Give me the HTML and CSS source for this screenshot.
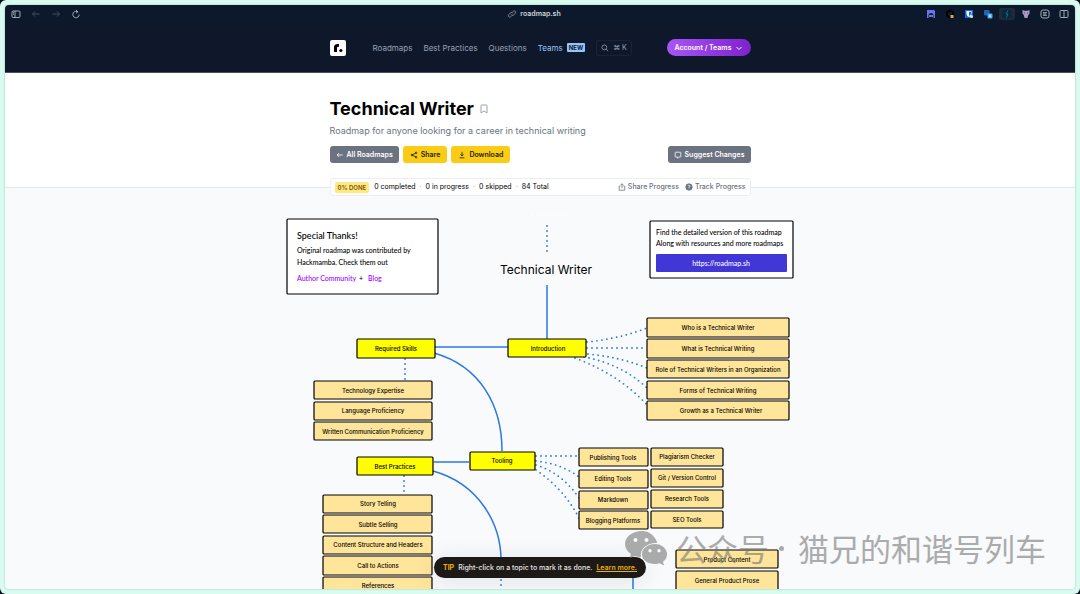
FILE: index.html
```html
<!DOCTYPE html>
<html lang="en">
<head>
<meta charset="utf-8">
<title>Technical Writer - roadmap.sh</title>
<link rel="stylesheet" href="styles.css">
</head>
<body>
<div class="frame">
<div class="window">
  <div class="toolbar">
    <div class="tools">
      <button class="tool" aria-label="Sidebar"><svg viewBox="0 0 10 10"><rect x="1" y="2" width="8" height="6.5" rx="1"/><path d="M4 2v6.5M2 3.7h1M2 5.2h1"/></svg></button>
      <button class="tool dim" aria-label="Back"><svg viewBox="0 0 10 10"><path d="M8.5 5h-7M4 2.5 1.5 5 4 7.5"/></svg></button>
      <button class="tool dim" aria-label="Forward"><svg viewBox="0 0 10 10"><path d="M1.5 5h7M6 2.500 8.500 5 6 7.500"/></svg></button>
      <button class="tool" aria-label="Reload"><svg viewBox="0 0 10 10"><path d="M7.300 3.300A3.200 3.200 0 1 0 8.200 5.500M5 1l1.800 1.700L5 4.300"/></svg></button>
    </div>
    <div class="address"><svg viewBox="0 0 10 10"><path d="M4.200 7.300 3.400 8.100A1.600 1.600 0 0 1 1.500 5.900L3.500 4A1.600 1.600 0 0 1 5.900 4.200M5.800 2.700 6.600 1.900A1.600 1.600 0 0 1 8.500 4.100L6.500 6A1.600 1.600 0 0 1 4.100 5.800"/></svg><span>roadmap.sh</span></div>
    <div class="tools extensions">
      <svg viewBox="0 0 10 10"><path fill="#6675f2" d="M1 1h7l1 1v7H7.500A2.500 2.500 0 0 0 2.500 9H1z"/><path d="M2.500 8V6.500a2.500 2.500 0 0 1 5 0V8z" fill="#101a4a"/><path d="M3 7h4" stroke="#cfd6ff"/></svg>
      <svg viewBox="0 0 10 10"><circle cx="5" cy="5" r="3.200" fill="none" stroke="#000" stroke-width="2"/><rect x="5.500" y="6" width="3" height="3" fill="#e8a04a"/></svg>
      <svg viewBox="0 0 10 10"><rect x="1" y="1" width="8" height="8" fill="#1769e0"/><path fill="#fff" d="M2.500 2h5v2.500q0 2.500-2.500 3.500Q2.500 7 2.500 4.500z"/><path fill="#1769e0" d="M5 2.700h2v2Q7 6 5 7z"/><circle cx="7.500" cy="7.500" r="1.500" fill="#ddd"/></svg>
      <svg viewBox="0 0 10 10"><rect x="1" y="1" width="5.500" height="5.500" rx="1" fill="#2262b8"/><rect x="4.500" y="4.500" width="5" height="5" rx="1" fill="#3da9f5"/><path d="M6 8.500 7 5.500l1 3M6.500 7.500h1" fill="none" stroke="#fff" stroke-width=".6"/></svg>
      <span class="active"><svg viewBox="0 0 10 10"><rect x=".5" y="1" width="9" height="8" fill="#06283a"/><path d="M6 1.500 4 5h2L4.500 8.500" fill="none" stroke="#17708a"/></svg></span>
      <svg viewBox="0 0 10 10"><path fill="#a99abf" d="M1.500 1 3.500 1.700h3L8.500 1v3.500L7 6.500 6.500 9h-3L3 6.500 1.500 4.500z"/><path d="M3.500 3.500v1M6.500 3.500v1" stroke="#5b4b75"/></svg>
      <svg class="line" viewBox="0 0 10 10"><rect x="1" y="1" width="8" height="8" rx="2"/><path d="M3 3.700h4M3 6.300h4M3 5h3"/></svg>
      <svg class="line" viewBox="0 0 10 10"><rect x="1" y="1.500" width="8" height="7" rx="1"/><path d="M5 1.500v7"/></svg>
    </div>
  </div>

  <header class="header">
    <div class="container bar">
      <a class="logo" href="#" aria-label="Home"><svg viewBox="0 0 16 16"><rect width="16" height="16" rx="2" fill="#fff"/><path d="M4 12V7.500Q4 4 7.500 4H9v2.700H8Q7 6.700 7 8v4z"/><circle cx="10.900" cy="10.500" r="1.600"/></svg></a>
      <nav class="nav">
        <a href="#">Roadmaps</a><a href="#">Best Practices</a><a href="#">Questions</a><a class="teams" href="#">Teams <span class="new">NEW</span></a>
        <button class="search"><svg viewBox="0 0 10 10"><circle cx="4.200" cy="4.200" r="3"/><path d="m6.500 6.500 2.500 2.500"/></svg><span>⌘ K</span></button>
      </nav>
      <button class="account"><span>Account / Teams</span><svg viewBox="0 0 10 10"><path d="m2.500 4 2.500 2.500L7.500 4"/></svg></button>
    </div>
  </header>

  <section class="hero">
    <div class="container">
      <div class="title"><h1>Technical Writer</h1><button class="bookmark" aria-label="Bookmark"><svg viewBox="0 0 10 10"><path d="M2 1.500q0-.5.500-.5h5q.5 0 .5.500V9L5 7 2 9z"/></svg></button></div>
      <p class="subtitle">Roadmap for anyone looking for a career in technical writing</p>
      <div class="actions">
        <a class="btn gray" href="#"><svg viewBox="0 0 10 10"><path d="M8.500 5h-7M4 2.500 1.500 5 4 7.500"/></svg>All Roadmaps</a>
        <button class="btn yellow"><svg viewBox="0 0 10 10"><path d="M2.500 5 7.500 2.500M2.500 5l5 2.500"/><circle cx="2.300" cy="5" r="1"/><circle cx="7.700" cy="2.300" r="1"/><circle cx="7.700" cy="7.700" r="1"/></svg>Share</button>
        <button class="btn yellow"><svg viewBox="0 0 10 10"><path d="M5 1v5M3 4.300l2 2 2-2M2 8.500h6"/></svg>Download</button>
        <a class="btn gray suggest" href="#"><svg viewBox="0 0 10 10"><path d="M2 1.500h6q.500 0 .500.500v5q0 .500-.500.500H6L4.500 9V7.500H2q-.500 0-.500-.500V2q0-.500.500-.500z"/></svg>Suggest Changes</a>
      </div>
      <div class="progress">
        <span class="done">0% DONE</span>
        <span>0 completed</span><i>·</i><span>0 in progress</span><i>·</i><span>0 skipped</span><i>·</i><span>84 Total</span>
        <button class="plain share"><svg viewBox="0 0 10 10"><path d="M5 6.500V1M3 2.800 5 1l2 1.800M3 4H1.500v5h7V4H7"/></svg>Share Progress</button>
        <button class="plain"><svg viewBox="0 0 10 10"><circle class="solid" cx="5" cy="5" r="4"/><path class="mark" d="M3.800 4A1.200 1.200 0 1 1 5 5.200v.7M5 6.800v.8"/></svg>Track Progress</button>
      </div>
    </div>
  </section>

  <main class="roadmap">
    <svg class="map" viewBox="270 188 540 401" role="group" aria-label="Technical Writer roadmap">
      <path class="ghost" d="M531 215h36"/>
      <g class="solid-line">
        <path d="M547 285v54M435 347h73M434 353C480 366 502 405 502 451M434 462h35M433 471C480 484 501 525 501 560M633 575v20"/>
      </g>
      <g class="dots">
        <path d="M547 226v28M405 359v22M404 476v19M587 342Q618 339 647 328M587 348h60M588 354Q620 357 647 368M584 357Q622 364 647 388M575 358Q620 375 647 405M501 580v9"/>
        <path d="M536 456h43M536 461Q562 464 579 477M536 465Q562 473 579 498M536 470Q564 489 579 518"/>
      </g>

      <g class="card">
        <rect x="287" y="219" width="151" height="75" rx="1"/>
        <text class="h" x="297" y="239">Special Thanks!</text>
        <text x="297" y="253">Original roadmap was contributed by</text>
        <text x="297" y="265">Hackmamba. Check them out</text>
        <a href="#"><text class="link" x="297" y="281">Author Community</text></a>
        <text x="359" y="281">+</text>
        <a href="#"><text class="link" x="368" y="281">Blog</text></a>
      </g>
      <g class="card">
        <rect x="650" y="221" width="143" height="57" rx="1"/>
        <text x="656" y="235">Find the detailed version of this roadmap</text>
        <text x="656" y="246">Along with resources and more roadmaps</text>
        <a href="#"><rect class="cta" x="656" y="254" width="131" height="18" rx="1"/><text class="cta-text" x="721" y="266">https://roadmap.sh</text></a>
      </g>
      <text class="root" x="546" y="274">Technical Writer</text>

      <g class="topic">
        <rect x="357" y="339" width="78" height="19" rx="1"/><text x="396" y="351">Required Skills</text>
        <rect x="508" y="339" width="78" height="18" rx="1"/><text x="548" y="351">Introduction</text>
        <rect x="470" y="452" width="65" height="18" rx="1"/><text x="502" y="463">Tooling</text>
        <rect x="357" y="457" width="76" height="18" rx="1"/><text x="395" y="469">Best Practices</text>
      </g>
      <g class="subtopic">
        <rect x="647" y="318" width="142" height="19" rx="1"/><text x="718" y="330">Who is a Technical Writer</text>
        <rect x="647" y="339" width="142" height="19" rx="1"/><text x="718" y="351">What is Technical Writing</text>
        <rect x="647" y="360" width="142" height="18" rx="1"/><text x="718" y="372">Role of Technical Writers in an Organization</text>
        <rect x="647" y="381" width="142" height="18" rx="1"/><text x="718" y="393">Forms of Technical Writing</text>
        <rect x="647" y="401" width="142" height="19" rx="1"/><text x="721" y="413">Growth as a Technical Writer</text>

        <rect x="314" y="381" width="118" height="18" rx="1"/><text x="373" y="393">Technology Expertise</text>
        <rect x="314" y="402" width="118" height="18" rx="1"/><text x="373" y="413">Language Proficiency</text>
        <rect x="314" y="422" width="118" height="18" rx="1"/><text x="373" y="434">Written Communication Proficiency</text>

        <rect x="323" y="495" width="109" height="18" rx="1"/><text x="378" y="506">Story Telling</text>
        <rect x="323" y="515" width="109" height="18" rx="1"/><text x="378" y="527">Subtle Selling</text>
        <rect x="323" y="536" width="109" height="18" rx="1"/><text x="378" y="547">Content Structure and Headers</text>
        <rect x="323" y="556" width="109" height="19" rx="1"/><text x="378" y="568">Call to Actions</text>
        <rect x="323" y="577" width="109" height="18" rx="1"/><text x="378" y="588">References</text>

        <rect x="579" y="448" width="69" height="18" rx="1"/><text x="613" y="460">Publishing Tools</text>
        <rect x="579" y="470" width="69" height="18" rx="1"/><text x="613" y="481">Editing Tools</text>
        <rect x="579" y="491" width="69" height="18" rx="1"/><text x="613" y="502">Markdown</text>
        <rect x="579" y="511" width="69" height="18" rx="1"/><text x="613" y="523">Blogging Platforms</text>
        <rect x="651" y="448" width="72" height="18" rx="1"/><text x="687" y="459">Plagiarism Checker</text>
        <rect x="651" y="469" width="72" height="18" rx="1"/><text x="687" y="480">Git / Version Control</text>
        <rect x="651" y="490" width="72" height="18" rx="1"/><text x="687" y="501">Research Tools</text>
        <rect x="651" y="511" width="72" height="17" rx="1"/><text x="687" y="522">SEO Tools</text>

        <rect x="676" y="550" width="102" height="18" rx="1"/><text x="727" y="562">Product Content</text>
        <rect x="676" y="571" width="102" height="19" rx="1"/><text x="727" y="583">General Product Prose</text>
      </g>
    </svg>
    <div class="tip"><b>TIP</b><span>Right-click on a topic to mark it as done.</span><a href="#">Learn more.</a></div>
    <div class="watermark" lang="zh">
      <svg viewBox="0 0 42 35"><path fill-rule="evenodd" d="M17 0C7.500 0 0 5.800 0 13c0 4 2.300 7.500 6 10l-1.300 4.500 5-2.500q3 1 6.300 1C14.500 18 22 11.500 32.300 12 30 4.500 24 0 17 0zM10.500 7a2 2 0 1 1 0 4 2 2 0 0 1 0-4zm11 0a2 2 0 1 1 0 4 2 2 0 0 1 0-4z"/><path fill-rule="evenodd" d="M30 13c-7.500 0-13 4.500-13 10.200S22.500 33 30 33q2.500 0 4.700-.7L39 34.500l-1-3.700c2.600-2 4-4.600 4-7.600C42 17.500 36.500 13 30 13zm-5 5a1.700 1.700 0 1 1 0 3.400 1.700 1.700 0 0 1 0-3.400zm9 0a1.700 1.700 0 1 1 0 3.400 1.700 1.700 0 0 1 0-3.400z"/></svg>
      <span>公众号</span><span class="dot"></span><span>猫兄的和谐号列车</span>
    </div>
  </main>
</div>
</div>
</body>
</html>
```

FILE: styles.css
```css
* { box-sizing: border-box; }

body {
  margin: 0;
  background: #0b1020;
  font-family: Inter, "Noto Sans CJK SC", sans-serif;
  font-size: 8px;
  line-height: 12px;
}

a { color: inherit; text-decoration: none; }

button {
  padding: 0;
  border: 0;
  background: none;
  color: inherit;
  font: inherit;
  cursor: pointer;
}

svg { fill: none; stroke: currentColor; flex: none; }

.frame {
  display: flex;
  height: 100vh;
  padding: 5px;
  border-radius: 6px;
  background: #d8fcf0;
}

.window {
  display: flex;
  flex: 1;
  flex-direction: column;
  overflow: hidden;
  border-radius: 4px;
  background: #fff;
  box-shadow: 0 0 2px #8fb8ae;
}

.toolbar {
  display: grid;
  grid-template-columns: 1fr auto 1fr;
  align-items: center;
  height: 18px;
  padding: 0 6px;
  background: #0c182b;
  color: #a3a9b3;
}

.tools { display: flex; align-items: center; gap: 10px; }
.tools svg, .address svg { display: block; width: 10px; height: 10px; }
.tool.dim { color: #434c5c; }
.extensions { justify-content: flex-end; gap: 9px; }
.extensions svg { stroke: none; }
.extensions .line { stroke: currentColor; }
.active { margin: 0 -3px; padding: 1px 3px; border-radius: 2px; background: #1f2a3b; }
.address { display: flex; align-items: center; gap: 3px; margin-right: 12px; color: #d2d5da; font-size: 7px; font-weight: 600; }
.address svg { color: #8c939f; }

.container { width: 100%; max-width: 421px; margin: 0 auto; }

.header {
  display: flex;
  align-items: center;
  height: 50px;
  border-bottom: 1px solid #475060;
  background: #0f172a;
}

.bar { display: flex; align-items: center; }
.logo svg { display: block; width: 16px; height: 16px; fill: #000; stroke: none; }
.nav { display: flex; align-items: center; gap: 11px; margin-left: 27px; color: #94a3b8; white-space: nowrap; }
.teams { display: flex; align-items: center; gap: 4px; color: #93c5fd; }
.new { padding: 0 2px; border-radius: 1px; background: #93c5fd; color: #0f172a; font-size: 6px; font-weight: 700; line-height: 9px; }
.search { display: flex; align-items: center; gap: 4px; height: 16px; padding: 0 4px; border: 1px solid #1a2334; border-radius: 3px; font-size: 7px; }
.search svg { width: 8px; height: 8px; }
.account {
  display: flex;
  align-items: center;
  gap: 2px;
  height: 17px;
  margin-left: auto;
  padding: 0 7px;
  border-radius: 9px;
  background: linear-gradient(90deg, #a855f7, #7e22ce);
  color: #fff;
  font-size: 7px;
  font-weight: 600;
}
.account svg { width: 10px; height: 10px; }

.hero { padding-top: 24px; border-bottom: 1px solid #e5e7eb; }
.title { display: flex; align-items: center; gap: 5px; }
h1 { margin: 0; color: #000; font-size: 18px; font-weight: 700; line-height: 24px; }
.bookmark { color: #9ca3af; }
.bookmark svg { display: block; width: 10px; height: 10px; }
.subtitle { margin: 3px 0 8px; color: #6b7280; font-size: 9px; line-height: 14px; }
.actions { display: flex; gap: 4px; }
.btn { display: flex; align-items: center; gap: 3px; height: 17px; padding: 0 6px; border-radius: 3px; font-size: 7px; font-weight: 600; }
.btn svg { width: 8px; height: 8px; }
.gray { background: #6b7280; color: #fff; }
.yellow { padding: 0 7px; background: #facc15; color: #221d08; }
.suggest { margin-left: auto; }
.progress {
  position: relative;
  z-index: 1;
  display: flex;
  align-items: center;
  gap: 4px;
  height: 18px;
  margin: 15px 0 -9px;
  padding: 0 4px;
  border: 1px solid #eceef1;
  border-radius: 3px;
  background: #fff;
  color: #000;
  font-size: 7px;
}
.progress i { color: #9ca3af; font-style: normal; }
.done { padding: 0 3px; margin-right: 1px; border-radius: 2px; background: #fde980; color: #854d0e; font-size: 6px; font-weight: 600; line-height: 11px; }
.plain { display: flex; align-items: center; gap: 2px; color: #6b7280; font-weight: 500; }
.plain svg { width: 8px; height: 8px; }
.share { margin-left: auto; margin-right: 2px; }
.plain .solid { fill: #6b7280; }
.plain .mark { stroke: #fff; }

.roadmap { position: relative; flex: 1; overflow: hidden; background: #f9fafc; }
.map { display: block; width: 540px; height: 401px; margin: 0 auto; font-size: 6px; font-weight: 500; }
.map text { fill: #000; stroke: none; }
.map rect { stroke: #000; stroke-width: 1.2; }
.solid-line { stroke: #2b78e4; stroke-width: 1.5; }
.dots { stroke: #2b78e4; stroke-width: 1.8; stroke-linecap: round; stroke-dasharray: 0 5; }
.ghost { stroke: #fff; stroke-dasharray: 2 3; }
.card { font-family: Lato, sans-serif; font-size: 7px; }
.card rect { fill: #fff; }
.map .cta { fill: #4136d6; stroke: none; }
.map .cta-text { fill: #fff; text-anchor: middle; }
.map .link { fill: #9a00ff; }
.map .h { font-size: 9px; }
.map .root { font-size: 12px; font-weight: 400; text-anchor: middle; }
.topic, .subtopic { text-anchor: middle; }
.topic rect { fill: #ff0; }
.subtopic rect { fill: #ffe599; }

.tip {
  position: absolute;
  bottom: 11px;
  left: 50%;
  display: flex;
  align-items: center;
  gap: 4px;
  height: 21px;
  padding: 0 9px;
  border-radius: 11px;
  background: #1c1917;
  box-shadow: 0 3px 24px #0000001a;
  color: #e7e5e4;
  font-size: 7px;
  font-weight: 500;
  white-space: nowrap;
  transform: translateX(-50%);
}
.tip b { color: #eab308; font-weight: 700; }
.tip a { color: #eab308; font-weight: 600; text-decoration: underline; }

.watermark {
  position: absolute;
  right: 29px;
  bottom: 23px;
  display: flex;
  align-items: center;
  color: #777;
  font-family: "Noto Sans CJK SC", sans-serif;
  font-size: 31px;
  font-weight: 400;
  line-height: 36px;
  opacity: .6;
  white-space: nowrap;
}
.watermark svg { width: 42px; height: 35px; margin-right: 9px; fill: currentColor; stroke: none; }
.dot { width: 5px; height: 5px; margin: 0 14px 0 10px; border-radius: 50%; background: currentColor; }
```
